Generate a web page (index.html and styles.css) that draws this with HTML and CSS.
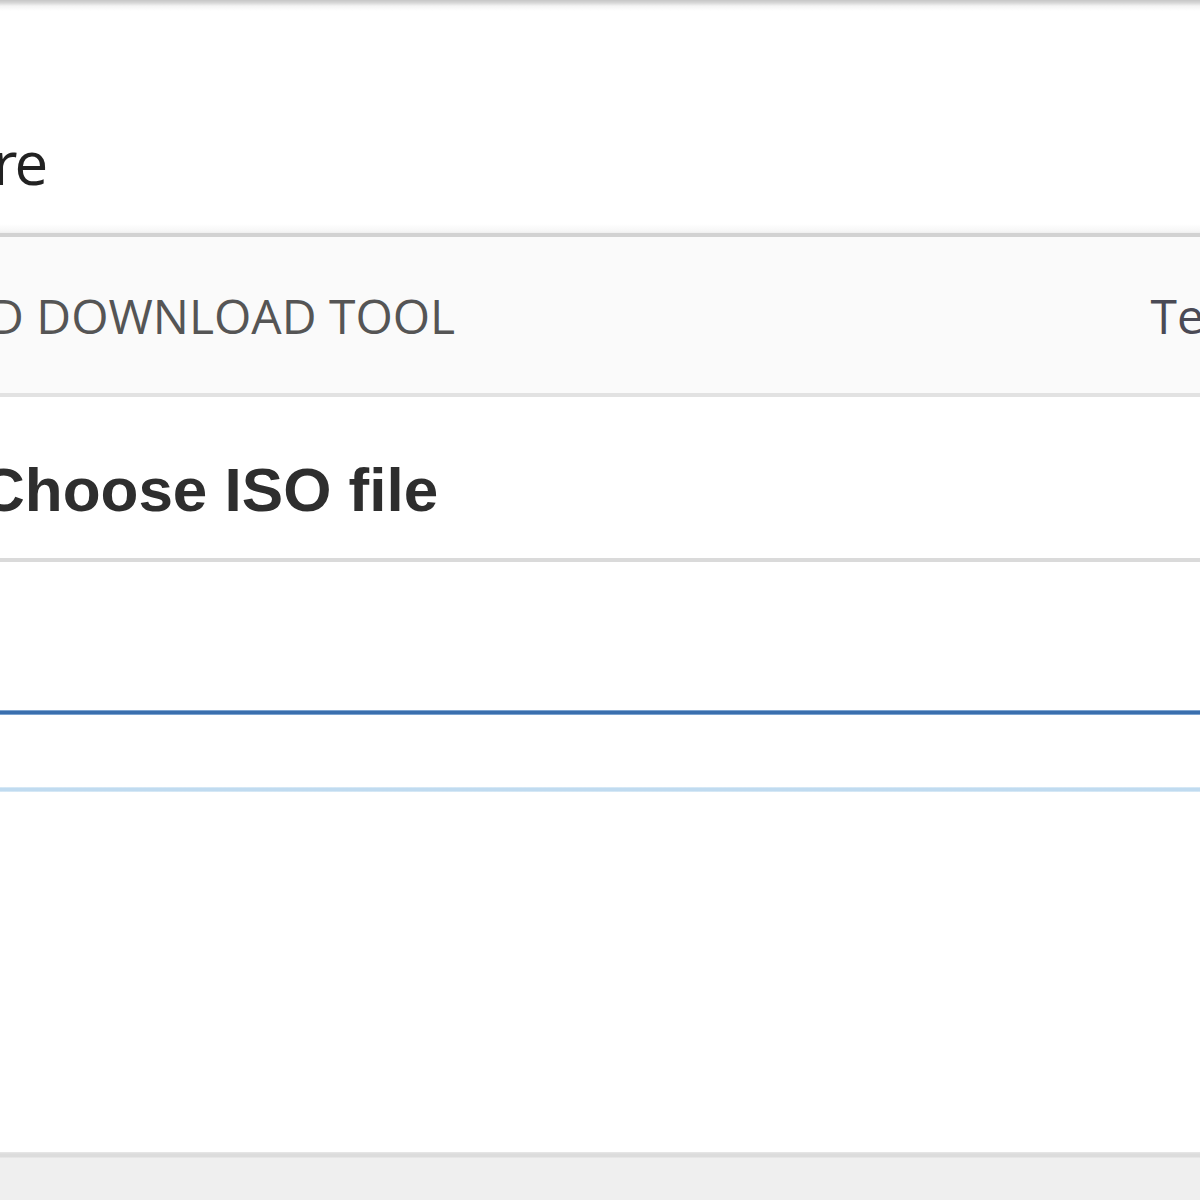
FILE: index.html
```html
<!DOCTYPE html>
<html>
<head>
<meta charset="utf-8">
<link rel="stylesheet" href="styles.css">
</head>
<body>
<div class="page">
  <header class="top">
    <span class="top-text">re</span>
  </header>
  <div class="sep sep-top"></div>
  <nav class="band">
    <span class="band-left">D DOWNLOAD TOOL</span>
    <span class="band-right">Te</span>
  </nav>
  <div class="sep sep-band"></div>
  <section class="title">
    <h1 class="title-text">Choose ISO file</h1>
  </section>
  <div class="sep sep-title"></div>
  <div class="gap gap-a"></div>
  <div class="sep sep-blue"></div>
  <div class="gap gap-b"></div>
  <div class="sep sep-lightblue"></div>
  <div class="gap gap-c"></div>
  <footer class="foot"></footer>
</div>
</body>
</html>
```
FILE: styles.css
```css
html, body {
  margin: 0;
  padding: 0;
  background: #ffffff;
  overflow: hidden;
}
.page {
  width: 1200px;
  height: 1200px;
  display: flex;
  flex-direction: column;
  overflow: hidden;
}
.top {
  height: 233px;
  flex: none;
  background: linear-gradient(to bottom, #c6c6c6 0px, #d8d8d8 3px, #f4f4f4 6px, #ffffff 11px, #ffffff 224px, #f6f6f6 231px, #eeeeee 233px);
  display: flex;
  align-items: flex-start;
  overflow: hidden;
}
.top-text {
  font-family: "Open Sans", "Noto Sans", sans-serif;
  font-size: 60px;
  line-height: 1;
  letter-spacing: -3px;
  color: #222222;
  margin-top: 132px;
  margin-left: -7px;
}
.sep { flex: none; }
.sep-top { height: 4px; background: #d2d2d2; }
.band {
  height: 156px;
  flex: none;
  background: #fafafa;
  display: flex;
  align-items: center;
  justify-content: space-between;
  overflow: hidden;
  font-family: "Open Sans", "Noto Sans", sans-serif;
  color: #555555;
}
.band-left {
  font-size: 48px;
  margin-left: -11px;
  white-space: nowrap;
}
.band-right {
  font-size: 48px;
  margin-right: -4px;
  color: #4a4a55;
  white-space: nowrap;
}
.sep-band { height: 4px; background: #e2e2e2; }
.title {
  height: 161px;
  flex: none;
  box-sizing: border-box;
  padding-top: 24px;
  display: flex;
  align-items: center;
  overflow: hidden;
}
.title-text {
  margin: 0 0 0 -20px;
  font-family: "Liberation Sans", Arial, sans-serif;
  font-weight: bold;
  font-size: 62px;
  color: #2e2e2e;
  white-space: nowrap;
}
.sep-title { height: 4px; background: #dadada; }
.gap-a { height: 148px; flex: none; }
.sep-blue { height: 5px; background: linear-gradient(to bottom, #9dbde0, #3a6fae 30%, #3a6fae 70%, #9dbde0); }
.gap-b { height: 72px; flex: none; }
.sep-lightblue { height: 5px; background: linear-gradient(to bottom, #e0eef8, #c0dbf0 30%, #c0dbf0 70%, #e0eef8); }
.gap-c { height: 360px; flex: none; }
.foot {
  flex: 1;
  background: linear-gradient(to bottom, #e8e8e8 0px, #dcdcdc 2px, #dcdcdc 5px, #efefef 6px, #efefef 100%);
}
```
